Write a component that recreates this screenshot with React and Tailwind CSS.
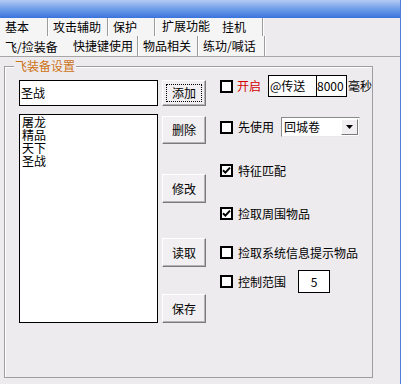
import React from "react";

function Check({ checked }) {
  return (
    <span className="w-[13px] h-[13px] border-2 border-black bg-white flex items-center justify-center shrink-0">
      {checked && (
        <svg width="9" height="9" viewBox="0 0 9 9">
          <path d="M1 4.2 L3.4 6.6 L8 1.6" stroke="black" strokeWidth="2" fill="none" />
        </svg>
      )}
    </span>
  );
}

function Btn({ children, className, focus }) {
  return (
    <div
      className={
        "relative w-[44px] flex items-center justify-center bg-[#f1eff1] border-t border-l border-white border-r border-b border-r-[#7a7a7a] border-b-[#7a7a7a] shadow-[inset_-1px_-1px_0_#b4b4b4] text-[12px] leading-none text-black " +
        className
      }
    >
      {focus && <span className="absolute inset-[3px] border border-dotted border-black" />}
      <span>{children}</span>
    </div>
  );
}

function Tab({ w, children, sel }) {
  return (
    <div
      className={
        "h-full flex items-center pl-[5px] text-[12px] leading-none shrink-0 " +
        (sel ? "" : "border-r border-r-[#9c9c9c] shadow-[1px_0_0_#ffffff]") +
        " " +
        w
      }
    >
      <span className={sel ? "-mt-[3px]" : ""}>{children}</span>
    </div>
  );
}

export default function App() {
  return (
    <div className="w-[401px] h-[384px] bg-[#eeebee] flex flex-col overflow-hidden border-r border-r-[#4f7fd6] text-black font-['Noto_Sans_CJK_SC','Noto_Sans',sans-serif]">
      <div className="h-[18px] shrink-0 bg-gradient-to-b from-[#b4cbf2] via-[#6e9de8] to-[#3a72dc]" />
      <div className="h-[18px] shrink-0 flex bg-[#eeebee]">
        <div className="flex h-full bg-[#f6f5f6]">
          <Tab w="w-[48px]">基本</Tab>
          <Tab w="w-[60px]">攻击辅助</Tab>
          <Tab w="w-[47px]">保护</Tab>
          <Tab w="w-[62px]" sel>
            <span className="pl-[2px]">扩展功能</span>
          </Tab>
          <Tab w="w-[46px]">挂机</Tab>
        </div>
      </div>
      <div className="h-[21px] shrink-0 flex border-b border-b-[#a6a6a6] bg-[#eeebee]">
        <div className="flex h-full bg-[#f6f5f6]">
          <Tab w="w-[68px]" sel>
            <span className="pt-[4px] block">飞/捡装备</span>
          </Tab>
          <Tab w="w-[70px]">快捷键使用</Tab>
          <Tab w="w-[60px]">物品相关</Tab>
          <Tab w="w-[67px]">练功/喊话</Tab>
        </div>
      </div>
      <div className="flex-1 pl-[4px] pt-[9px]">
        <div className="relative w-[369px] h-[312px] border border-[#9e9e9e] shadow-[inset_1px_1px_0_#ffffff]">
          <span className="absolute left-[9px] -top-[8px] px-[1px] bg-[#eeebee] text-[12px] leading-[14px] text-[#cc7318]">
            飞装备设置
          </span>
          <div className="flex pl-[14px] pt-[8px]">
            <div className="w-[139px] mt-[5px] flex flex-col">
              <div className="h-[26px] bg-white border border-black flex items-center pl-[1px] text-[12px] leading-none">
                圣战
              </div>
              <div className="mt-[8px] h-[209px] bg-white border border-black pl-[2px] text-[12px] leading-[13px]">
                <div>屠龙</div>
                <div>精品</div>
                <div>天下</div>
                <div>圣战</div>
              </div>
            </div>
            <div className="ml-[4px] mt-[5px] flex flex-col">
              <Btn className="h-[26px]" focus>添加</Btn>
              <Btn className="mt-[10px] h-[28px]">删除</Btn>
              <Btn className="mt-[30px] h-[29px]">修改</Btn>
              <Btn className="mt-[35px] h-[29px]">读取</Btn>
              <Btn className="mt-[27px] h-[29px]">保存</Btn>
            </div>
            <div className="ml-[14px] flex flex-col text-[12px] leading-none">
              <div className="h-[22px] flex items-center">
                <Check />
                <span className="ml-[4px] text-[#d40000]">开启</span>
                <div className="ml-[7px] flex h-[22px]">
                  <div className="w-[49px] h-full bg-white border border-black flex items-center pl-[1px]">@传送</div>
                  <div className="w-[30px] h-full bg-white border border-black border-l-0 flex items-center">8000</div>
                </div>
                <span className="ml-[1px]">毫秒</span>
              </div>
              <div className="mt-[20px] h-[20px] flex items-center">
                <Check />
                <span className="ml-[5px]">先使用</span>
                <div className="ml-[7px] w-[79px] h-[20px] bg-white border border-t-[#8a8a8a] border-l-[#8a8a8a] border-r-[#e8e8e8] border-b-[#e8e8e8] flex items-center">
                  <span className="pl-[2px] flex-1">回城卷</span>
                  <div className="w-[17px] h-[16px] mr-[1px] bg-[#f1eff1] border-t border-l border-white border-r border-b border-r-[#7a7a7a] border-b-[#7a7a7a] flex items-center justify-center">
                    <svg width="7" height="4" viewBox="0 0 7 4">
                      <path d="M0 0 H7 L3.5 4 Z" fill="black" />
                    </svg>
                  </div>
                </div>
              </div>
              <div className="mt-[27px] h-[13px] flex items-center">
                <Check checked />
                <span className="ml-[5px]">特征匹配</span>
              </div>
              <div className="mt-[30px] h-[13px] flex items-center">
                <Check checked />
                <span className="ml-[5px]">捡取周围物品</span>
              </div>
              <div className="mt-[26px] h-[13px] flex items-center">
                <Check />
                <span className="ml-[5px]">捡取系统信息提示物品</span>
              </div>
              <div className="mt-[11px] h-[23px] flex items-center">
                <Check />
                <span className="ml-[5px]">控制范围</span>
                <div className="ml-[12px] w-[32px] h-[23px] bg-white border border-black flex items-center justify-center">5</div>
              </div>
            </div>
          </div>
        </div>
      </div>
    </div>
  );
}
